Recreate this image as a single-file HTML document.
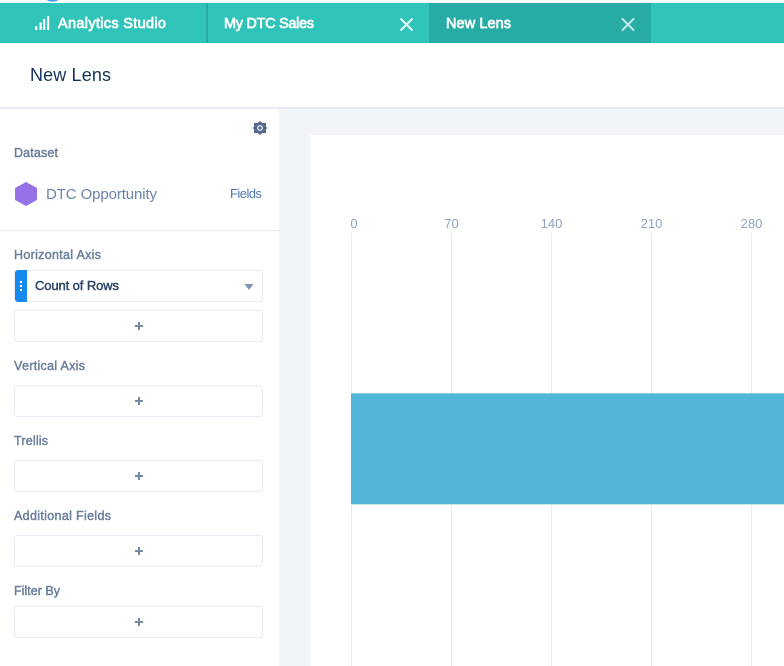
<!DOCTYPE html>
<html><head><meta charset="utf-8"><title>New Lens</title>
<style>
html,body{margin:0;padding:0;background:#fff;width:784px;height:666px;overflow:hidden}
svg{display:block}
text{font-family:"Liberation Sans",sans-serif}
.l{font-size:12.500px;fill:#6b7f9c;stroke:#6b7f9c;stroke-width:.45}
.t{font-size:14.500px;fill:#fff;stroke:#fff;stroke-width:.7}
.a{font-size:13px;fill:#8fa3bd;text-anchor:middle}
.b{fill:#fff;stroke:#e6eaf1;stroke-width:1}
.p{stroke:#7489a6;stroke-width:2;fill:none}
.g{stroke:#e8eaee;stroke-width:1}
</style></head><body>
<svg width="784" height="666" viewBox="0 0 784 666" xmlns="http://www.w3.org/2000/svg">
<rect width="784" height="666" fill="#fff"/>
<path d="M47 0a5 1.500 0 0 0 11 0z" fill="#4a9cf0"/>
<rect y="3" width="784" height="40" fill="#30c3ba"/>
<rect x="206" y="3" width="2" height="40" fill="#27aca5"/>
<rect x="429" y="3" width="222" height="40" fill="#27aca5"/>
<g fill="#fff"><rect x="35" y="26" width="2.200" height="4"/><rect x="39.500" y="22.500" width="2.200" height="7.500"/><rect x="43" y="19" width="2.200" height="11"/><rect x="47" y="16" width="2.200" height="14"/></g>
<text class="t" x="58" y="28" textLength="108" lengthAdjust="spacing">Analytics Studio</text>
<text class="t" x="224" y="28" textLength="90" lengthAdjust="spacing">My DTC Sales</text>
<text class="t" x="446" y="28" textLength="65" lengthAdjust="spacing">New Lens</text>
<path d="M400.500 18.500l12 12m0-12l-12 12" stroke="#e4f7f5" stroke-width="2" fill="none"/>
<path d="M622 18.500l12 12m0-12l-12 12" stroke="#c0e8e4" stroke-width="2" fill="none"/>
<text x="30" y="81" font-size="18" fill="#16325c" textLength="81" lengthAdjust="spacing">New Lens</text>
<rect y="107" width="784" height="2" fill="#e8ebf1"/>
<rect x="279" y="109" width="505" height="557" fill="#f1f4f9"/>
<rect x="310" y="135" width="474" height="531" fill="#fff"/>
<path d="M260 121l2.200 2h3.800v4l1.500 1-1.500 1v4h-3.800l-2.200 2-2.200-2H254v-4l-1.500-1 1.500-1v-4h3.800z" fill="#54698d"/>
<circle cx="260" cy="128" r="3" fill="#dfe4ec"/><circle cx="260" cy="128" r="1.600" fill="#54698d"/>
<text class="l" x="14" y="157" textLength="44" lengthAdjust="spacing">Dataset</text>
<path d="M26 182l11 6v12l-11 6-11-6v-12z" fill="#9672e8"/>
<text x="46" y="199" font-size="15" fill="#6b82a8" textLength="111" lengthAdjust="spacing">DTC Opportunity</text>
<text x="230" y="198" font-size="13" fill="#4f78b8" textLength="32" lengthAdjust="spacing">Fields</text>
<rect y="230" width="279" height="1" fill="#e8ebf1"/>
<text class="l" x="14" y="259" textLength="87" lengthAdjust="spacing">Horizontal Axis</text>
<rect class="b" x="14.500" y="270.500" width="248" height="31" rx="3"/>
<path d="M27 270H18a3 3 0 0 0-3 3v26a3 3 0 0 0 3 3h9z" fill="#1589ee"/>
<g fill="#fff"><rect x="20" y="281" width="2" height="2"/><rect x="20" y="285" width="2" height="2"/><rect x="20" y="289" width="2" height="2"/></g>
<text x="35" y="290" font-size="13" fill="#2f4468" stroke="#2f4468" stroke-width=".45" textLength="84" lengthAdjust="spacing">Count of Rows</text>
<path d="M244.500 284h9l-4.500 6z" fill="#7f93b2"/>
<rect class="b" x="14.500" y="310.500" width="248" height="31" rx="3"/>
<path class="p" d="M135 326h8m-4-4v8"/>
<text class="l" x="14" y="370" textLength="71" lengthAdjust="spacing">Vertical Axis</text>
<rect class="b" x="14.500" y="385.500" width="248" height="31" rx="3"/>
<path class="p" d="M135 401h8m-4-4v8"/>
<text class="l" x="14" y="445" textLength="34" lengthAdjust="spacing">Trellis</text>
<rect class="b" x="14.500" y="460.500" width="248" height="31" rx="3"/>
<path class="p" d="M135 476h8m-4-4v8"/>
<text class="l" x="14" y="520" textLength="97" lengthAdjust="spacing">Additional Fields</text>
<rect class="b" x="14.500" y="535.500" width="248" height="31" rx="3"/>
<path class="p" d="M135 551h8m-4-4v8"/>
<text class="l" x="14" y="595" textLength="46" lengthAdjust="spacing">Filter By</text>
<rect class="b" x="14.500" y="606.500" width="248" height="31" rx="3"/>
<path class="p" d="M135 622h8m-4-4v8"/>
<text class="a" x="354" y="228">0</text>
<text class="a" x="451.500" y="228">70</text>
<text class="a" x="551.500" y="228">140</text>
<text class="a" x="651.500" y="228">210</text>
<text class="a" x="751.500" y="228">280</text>
<path class="g" d="M351.500 233V666M451.500 233V666M551.500 233V666M651.500 233V666M751.500 233V666"/>
<rect x="351" y="393" width="433" height="111" fill="#52b5d9"/>
<rect x="351" y="393" width="433" height="1" fill="#8fcde4"/>
<rect x="351" y="504" width="433" height="1" fill="#c9e7f3"/>
</svg>
</body></html>
